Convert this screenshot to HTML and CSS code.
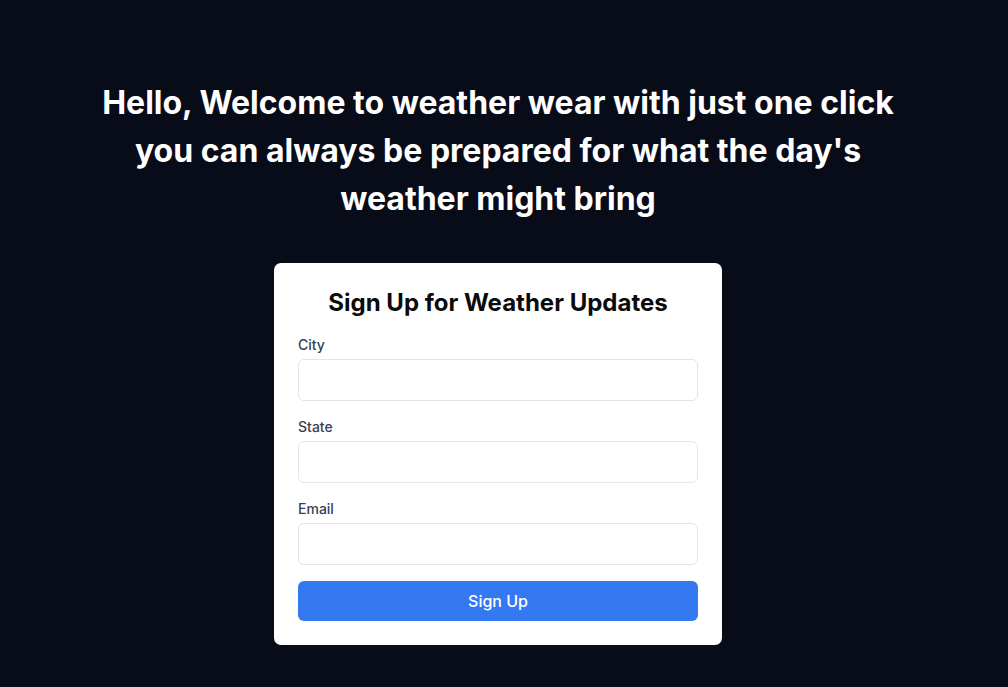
FILE: index.html
```html
<!DOCTYPE html>
<html lang="en">
<head>
<meta charset="utf-8">
<title>Weather Wear</title>
<link rel="stylesheet" href="styles.css">
</head>
<body>
<main class="page">
  <h1 class="hero">Hello, Welcome to weather wear with just one click you can always be prepared for what the day's weather might bring</h1>
  <form class="card">
    <h2 class="card-title">Sign Up for Weather Updates</h2>
    <div class="field">
      <label class="label" for="city">City</label>
      <input class="input" id="city" type="text">
    </div>
    <div class="field">
      <label class="label" for="state">State</label>
      <input class="input" id="state" type="text">
    </div>
    <div class="field">
      <label class="label" for="email">Email</label>
      <input class="input" id="email" type="email">
    </div>
    <button class="btn" type="button">Sign Up</button>
  </form>
</main>
</body>
</html>
```
FILE: styles.css
```css
* { box-sizing: border-box; }
html, body { margin: 0; padding: 0; }
body {
  background: #080c18;
  font-family: Inter, "Noto Sans", sans-serif;
  min-height: 687px;
}
.page {
  display: flex;
  flex-direction: column;
  align-items: center;
  padding: 79px 12px 0 0;
}
.hero {
  margin: 0;
  max-width: 810px;
  color: #ffffff;
  font-size: 32px;
  font-weight: 700;
  line-height: 48px;
  text-align: center;
}
.card {
  margin-top: 40px;
  width: 448px;
  background: #ffffff;
  border-radius: 7px;
  padding: 24px;
  display: flex;
  flex-direction: column;
  gap: 16px;
}
.card-title {
  margin: 0;
  font-size: 24px;
  line-height: 32px;
  font-weight: 700;
  color: #0b0b0b;
  text-align: center;
}
.field {
  display: flex;
  flex-direction: column;
  gap: 4px;
}
.label {
  font-size: 14px;
  line-height: 20px;
  font-weight: 500;
  color: #374151;
}
.input {
  height: 42px;
  width: 100%;
  border: 1px solid #e3e5e8;
  border-radius: 6px;
  background: #fff;
  font: inherit;
  padding: 0 12px;
}
.btn {
  height: 40px;
  width: 100%;
  border: 0;
  border-radius: 6px;
  background: #3579f0;
  color: #ffffff;
  font-family: inherit;
  font-size: 16px;
  font-weight: 500;
}
```
